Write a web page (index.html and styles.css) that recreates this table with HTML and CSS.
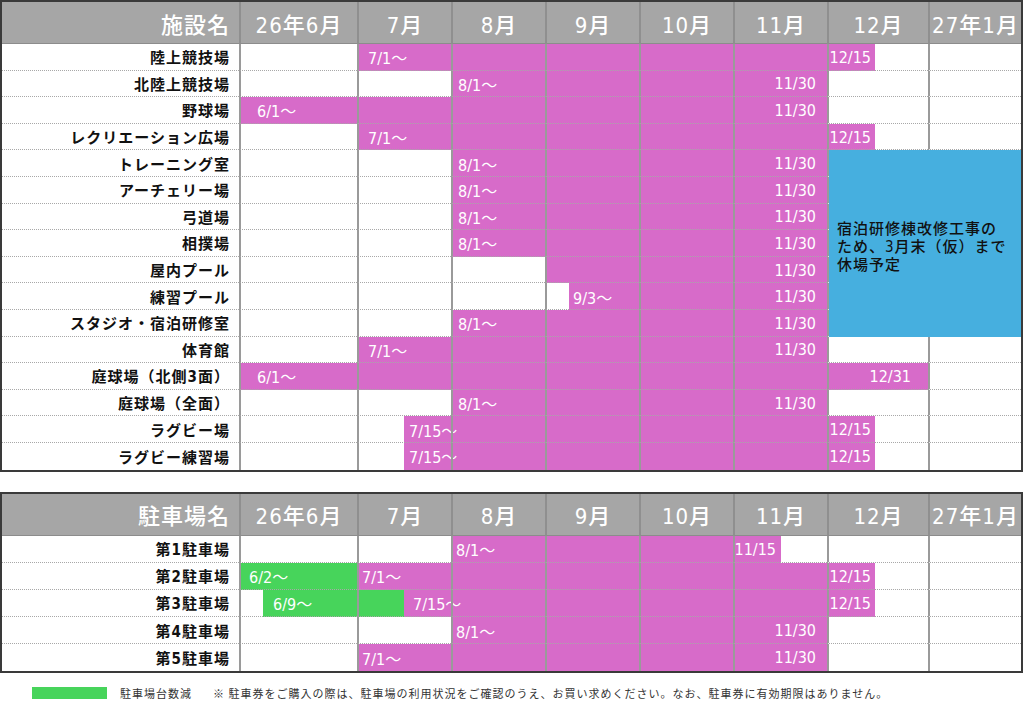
FILE: index.html
```html
<!DOCTYPE html>
<html lang="ja">
<head>
<meta charset="utf-8">
<title>施設利用スケジュール</title>
<link rel="stylesheet" href="styles.css">
</head>
<body>
<div class="page">

  <div class="sched facilities">
    <div class="row hdr">
      <div class="hname">施設名</div>
      <div class="hcell">26年6月</div><div class="hcell">7月</div><div class="hcell">8月</div><div class="hcell">9月</div><div class="hcell">10月</div><div class="hcell">11月</div><div class="hcell">12月</div><div class="hcell">27年1月</div>
    </div>

    <div class="row">
      <div class="name">陸上競技場</div>
      <div class="cell"></div><div class="cell"></div><div class="cell"></div><div class="cell"></div><div class="cell"></div><div class="cell"></div><div class="cell"></div><div class="cell"></div>
      <div class="bar mag" style="left:355px;width:518px"><span class="st" style="margin-left:11px">7/1〜</span><span class="en" style="margin-right:4px">12/15</span></div>
    </div>
    <div class="row">
      <div class="name">北陸上競技場</div>
      <div class="cell"></div><div class="cell"></div><div class="cell"></div><div class="cell"></div><div class="cell"></div><div class="cell"></div><div class="cell"></div><div class="cell"></div>
      <div class="bar mag" style="left:449px;width:376px"><span class="st" style="margin-left:7px">8/1〜</span><span class="en" style="margin-right:11px">11/30</span></div>
    </div>
    <div class="row">
      <div class="name">野球場</div>
      <div class="cell"></div><div class="cell"></div><div class="cell"></div><div class="cell"></div><div class="cell"></div><div class="cell"></div><div class="cell"></div><div class="cell"></div>
      <div class="bar mag" style="left:237px;width:588px"><span class="st" style="margin-left:18px">6/1〜</span><span class="en" style="margin-right:11px">11/30</span></div>
    </div>
    <div class="row">
      <div class="name">レクリエーション広場</div>
      <div class="cell"></div><div class="cell"></div><div class="cell"></div><div class="cell"></div><div class="cell"></div><div class="cell"></div><div class="cell"></div><div class="cell"></div>
      <div class="bar mag" style="left:355px;width:518px"><span class="st" style="margin-left:11px">7/1〜</span><span class="en" style="margin-right:4px">12/15</span></div>
    </div>
    <div class="row">
      <div class="name">トレーニング室</div>
      <div class="cell"></div><div class="cell"></div><div class="cell"></div><div class="cell"></div><div class="cell"></div><div class="cell"></div><div class="cell"></div><div class="cell"></div>
      <div class="bar mag" style="left:449px;width:376px"><span class="st" style="margin-left:7px">8/1〜</span><span class="en" style="margin-right:11px">11/30</span></div>
    </div>
    <div class="row">
      <div class="name">アーチェリー場</div>
      <div class="cell"></div><div class="cell"></div><div class="cell"></div><div class="cell"></div><div class="cell"></div><div class="cell"></div><div class="cell"></div><div class="cell"></div>
      <div class="bar mag" style="left:449px;width:376px"><span class="st" style="margin-left:7px">8/1〜</span><span class="en" style="margin-right:11px">11/30</span></div>
    </div>
    <div class="row">
      <div class="name">弓道場</div>
      <div class="cell"></div><div class="cell"></div><div class="cell"></div><div class="cell"></div><div class="cell"></div><div class="cell"></div><div class="cell"></div><div class="cell"></div>
      <div class="bar mag" style="left:449px;width:376px"><span class="st" style="margin-left:7px">8/1〜</span><span class="en" style="margin-right:11px">11/30</span></div>
    </div>
    <div class="row">
      <div class="name">相撲場</div>
      <div class="cell"></div><div class="cell"></div><div class="cell"></div><div class="cell"></div><div class="cell"></div><div class="cell"></div><div class="cell"></div><div class="cell"></div>
      <div class="bar mag" style="left:449px;width:376px"><span class="st" style="margin-left:7px">8/1〜</span><span class="en" style="margin-right:11px">11/30</span></div>
    </div>
    <div class="row">
      <div class="name">屋内プール</div>
      <div class="cell"></div><div class="cell"></div><div class="cell"></div><div class="cell"></div><div class="cell"></div><div class="cell"></div><div class="cell"></div><div class="cell"></div>
      <div class="bar mag" style="left:543px;width:282px"><span class="en" style="margin-right:11px">11/30</span></div>
    </div>
    <div class="row">
      <div class="name">練習プール</div>
      <div class="cell"></div><div class="cell"></div><div class="cell"></div><div class="cell"></div><div class="cell"></div><div class="cell"></div><div class="cell"></div><div class="cell"></div>
      <div class="bar mag" style="left:567px;width:258px"><span class="st" style="margin-left:4px">9/3〜</span><span class="en" style="margin-right:11px">11/30</span></div>
    </div>
    <div class="row">
      <div class="name">スタジオ・宿泊研修室</div>
      <div class="cell"></div><div class="cell"></div><div class="cell"></div><div class="cell"></div><div class="cell"></div><div class="cell"></div><div class="cell"></div><div class="cell"></div>
      <div class="bar mag" style="left:449px;width:376px"><span class="st" style="margin-left:7px">8/1〜</span><span class="en" style="margin-right:11px">11/30</span></div>
    </div>
    <div class="row">
      <div class="name">体育館</div>
      <div class="cell"></div><div class="cell"></div><div class="cell"></div><div class="cell"></div><div class="cell"></div><div class="cell"></div><div class="cell"></div><div class="cell"></div>
      <div class="bar mag" style="left:355px;width:470px"><span class="st" style="margin-left:11px">7/1〜</span><span class="en" style="margin-right:11px">11/30</span></div>
    </div>
    <div class="row">
      <div class="name">庭球場（北側3面）</div>
      <div class="cell"></div><div class="cell"></div><div class="cell"></div><div class="cell"></div><div class="cell"></div><div class="cell"></div><div class="cell"></div><div class="cell"></div>
      <div class="bar mag" style="left:237px;width:689px"><span class="st" style="margin-left:18px">6/1〜</span><span class="en" style="margin-right:17px">12/31</span></div>
    </div>
    <div class="row">
      <div class="name">庭球場（全面）</div>
      <div class="cell"></div><div class="cell"></div><div class="cell"></div><div class="cell"></div><div class="cell"></div><div class="cell"></div><div class="cell"></div><div class="cell"></div>
      <div class="bar mag" style="left:449px;width:376px"><span class="st" style="margin-left:7px">8/1〜</span><span class="en" style="margin-right:11px">11/30</span></div>
    </div>
    <div class="row">
      <div class="name">ラグビー場</div>
      <div class="cell"></div><div class="cell"></div><div class="cell"></div><div class="cell"></div><div class="cell"></div><div class="cell"></div><div class="cell"></div><div class="cell"></div>
      <div class="bar mag" style="left:402px;width:471px"><span class="st" style="margin-left:5px">7/15〜</span><span class="en" style="margin-right:4px">12/15</span></div>
    </div>
    <div class="row last">
      <div class="name">ラグビー練習場</div>
      <div class="cell"></div><div class="cell"></div><div class="cell"></div><div class="cell"></div><div class="cell"></div><div class="cell"></div><div class="cell"></div><div class="cell"></div>
      <div class="bar mag" style="left:402px;width:471px"><span class="st" style="margin-left:5px">7/15〜</span><span class="en" style="margin-right:4px">12/15</span></div>
    </div>

    <div class="closure">宿泊研修棟改修工事のため、3月末（仮）まで休場予定</div>
  </div>

  <div class="sched parking">
    <div class="row hdr">
      <div class="hname">駐車場名</div>
      <div class="hcell">26年6月</div><div class="hcell">7月</div><div class="hcell">8月</div><div class="hcell">9月</div><div class="hcell">10月</div><div class="hcell">11月</div><div class="hcell">12月</div><div class="hcell">27年1月</div>
    </div>
    <div class="row">
      <div class="name">第1駐車場</div>
      <div class="cell"></div><div class="cell"></div><div class="cell"></div><div class="cell"></div><div class="cell"></div><div class="cell"></div><div class="cell"></div><div class="cell"></div>
      <div class="bar mag" style="left:449px;width:330px"><span class="st" style="margin-left:5px">8/1〜</span><span class="en" style="margin-right:5px">11/15</span></div>
    </div>
    <div class="row">
      <div class="name">第2駐車場</div>
      <div class="cell"></div><div class="cell"></div><div class="cell"></div><div class="cell"></div><div class="cell"></div><div class="cell"></div><div class="cell"></div><div class="cell"></div>
      <div class="bar grn" style="left:237px;width:118px"><span class="st" style="margin-left:10px">6/2〜</span></div>
      <div class="bar mag" style="left:355px;width:518px"><span class="st" style="margin-left:5px">7/1〜</span><span class="en" style="margin-right:4px">12/15</span></div>
    </div>
    <div class="row">
      <div class="name">第3駐車場</div>
      <div class="cell"></div><div class="cell"></div><div class="cell"></div><div class="cell"></div><div class="cell"></div><div class="cell"></div><div class="cell"></div><div class="cell"></div>
      <div class="bar grn" style="left:261px;width:141px"><span class="st" style="margin-left:10px">6/9〜</span></div>
      <div class="bar mag" style="left:402px;width:471px"><span class="st" style="margin-left:9px">7/15〜</span><span class="en" style="margin-right:4px">12/15</span></div>
    </div>
    <div class="row">
      <div class="name">第4駐車場</div>
      <div class="cell"></div><div class="cell"></div><div class="cell"></div><div class="cell"></div><div class="cell"></div><div class="cell"></div><div class="cell"></div><div class="cell"></div>
      <div class="bar mag" style="left:449px;width:376px"><span class="st" style="margin-left:5px">8/1〜</span><span class="en" style="margin-right:11px">11/30</span></div>
    </div>
    <div class="row last">
      <div class="name">第5駐車場</div>
      <div class="cell"></div><div class="cell"></div><div class="cell"></div><div class="cell"></div><div class="cell"></div><div class="cell"></div><div class="cell"></div><div class="cell"></div>
      <div class="bar mag" style="left:355px;width:470px"><span class="st" style="margin-left:5px">7/1〜</span><span class="en" style="margin-right:11px">11/30</span></div>
    </div>
  </div>

  <div class="legend">
    <span class="swatch"></span>
    <span class="legend-label">駐車場台数減</span>
    <span class="note">※ 駐車券をご購入の際は、駐車場の利用状況をご確認のうえ、お買い求めください。なお、駐車券に有効期限はありません。</span>
  </div>

</div>
</body>
</html>
```

FILE: styles.css
```css
* { box-sizing: border-box; }

body {
  margin: 0;
  background: #ffffff;
  font-family: "Noto Sans CJK JP", sans-serif;
  color: #111;
}

.page {
  width: 1024px;
}

.sched {
  position: relative;
  width: 1023px;
  border: 2px solid #3a3a3a;
}

.facilities { --rh: 26.6px; margin-bottom: 20px; }
.parking { --rh: 27.2px; }

.row {
  display: grid;
  grid-template-columns: 237px 118px 94px 94px 94px 94px 94px 101px 93px;
  position: relative;
  isolation: isolate;
  height: var(--rh);
  background: #ffffff;
}

.row.hdr {
  height: 42px;
  background: #a6a6a6;
  color: #ffffff;
  font-family: "Liberation Sans Narrow", "DejaVu Sans Condensed", "Noto Sans CJK JP", sans-serif;
  font-size: 22px;
  font-weight: 500;
  letter-spacing: 1px;
}

.hname,
.hcell {
  display: flex;
  align-items: center;
  border-bottom: 1px solid #8c8c8c;
}

.hname {
  justify-content: flex-end;
  padding-right: 9px;
}

.hcell {
  justify-content: center;
  border-left: 2px solid #8f8f8f;
}

.name {
  display: flex;
  align-items: center;
  justify-content: flex-end;
  padding-right: 9px;
  font-family: "Liberation Sans Narrow", "DejaVu Sans Condensed", "Noto Sans CJK JP", sans-serif;
  font-size: 15px;
  font-weight: bold;
  letter-spacing: 1px;
  border-bottom: 1px dotted #a8a8a8;
}

.cell {
  border-left: 2px solid #9a9a9a;
  border-bottom: 1px dotted #a8a8a8;
}

.row.last .name,
.row.last .cell {
  border-bottom: none;
}

.bar {
  position: absolute;
  top: 0;
  bottom: 0;
  z-index: -1;
  display: flex;
  align-items: center;
  color: #ffffff;
  font-family: "Liberation Sans Narrow", "DejaVu Sans Condensed", "Noto Sans CJK JP", sans-serif;
  font-size: 16px;
  letter-spacing: 0;
  white-space: nowrap;
}

.bar.mag { background: #d76bc9; }
.bar.grn { background: #47d45b; }

.bar .en { margin-left: auto; }

.closure {
  position: absolute;
  left: 827px;
  top: calc(42px + 4 * 26.6px);
  width: 192px;
  height: calc(7 * 26.6px);
  background: #46afdf;
  display: flex;
  align-items: center;
  padding: 8px 10px 0 8px;
  font-family: "Liberation Sans Narrow", "DejaVu Sans Condensed", "Noto Sans CJK JP", sans-serif;
  font-size: 15px;
  font-weight: 500;
  line-height: 18px;
  letter-spacing: 1px;
  color: #111;
}

.legend {
  display: flex;
  align-items: center;
  margin: 14px 0 0 32px;
  font-size: 11px;
  letter-spacing: 1px;
  color: #333;
  line-height: 12px;
}

.swatch {
  width: 75px;
  height: 12px;
  background: #47d45b;
  margin-right: 13px;
}

.legend-label {
  margin-right: 21px;
}
```
